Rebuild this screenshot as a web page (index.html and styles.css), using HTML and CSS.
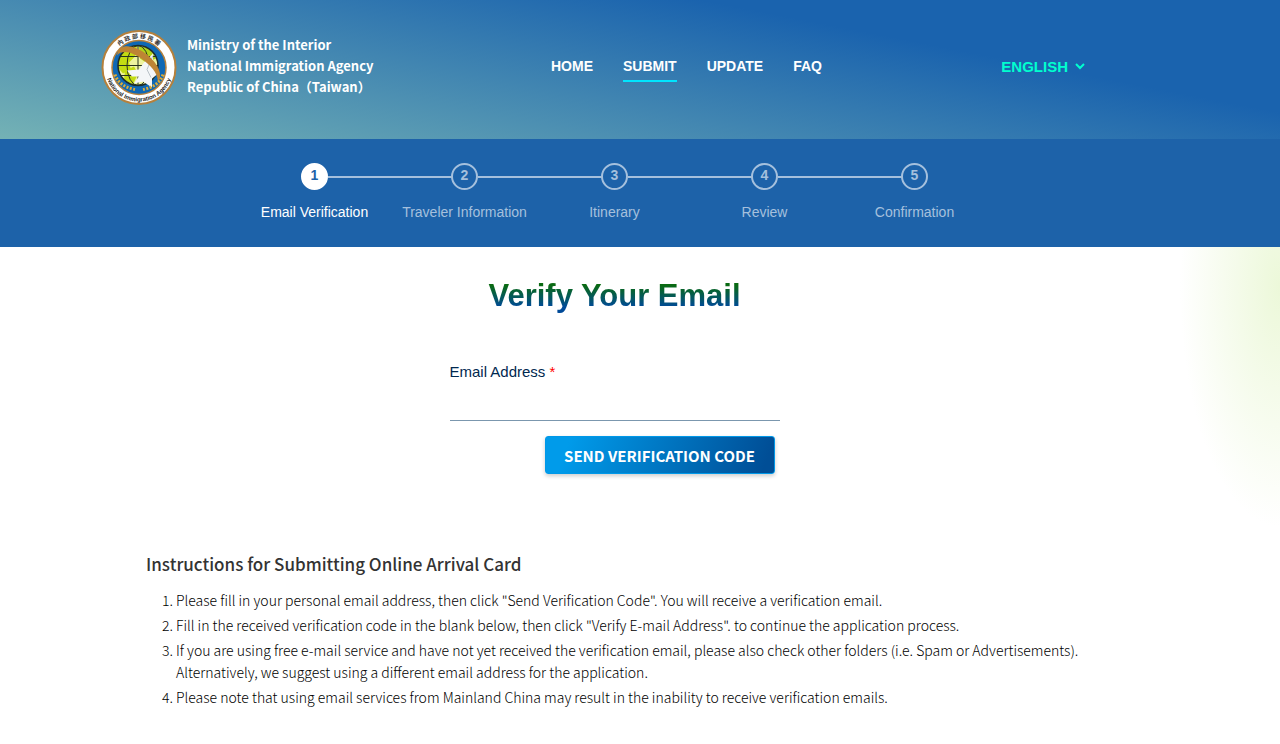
FILE: index.html
```
<!DOCTYPE html>
<html lang="en">
<head>
  <meta charset="UTF-8">
  <meta name="viewport" content="width=device-width, initial-scale=1.0">
  <title>Verify Your Email</title>
  <link rel="stylesheet" href="styles.css">
</head>
<body>
  <header class="site-header">
    <a href="#" class="brand">
      <svg class="seal" viewBox="0 0 76 76" aria-hidden="true">
        <defs>
          <path id="arc-top" d="M9 38 A29 29 0 0 1 67 38"/>
          <path id="arc-bottom" d="M4 38 A34 34 0 0 0 72 38"/>
          <clipPath id="globe"><circle cx="37" cy="36" r="20"/></clipPath>
        </defs>
        <circle cx="38" cy="38" r="36.5" fill="#fff" stroke="#b5803c" stroke-width="2"/>
        <circle cx="38" cy="38" r="27" fill="#0f68b4" stroke="#b5803c" stroke-width="1.5"/>
        <circle cx="37" cy="36" r="20" fill="#eef3a0"/>
        <g clip-path="url(#globe)">
          <path d="M17 26 Q26 13 36 17 L34 27 L28 33 L30 40 L22 44 L16 37Z" fill="#c3dc12"/>
          <path d="M38 17 L48 18 L55 29 L45 33 L39 29Z" fill="#b0d318"/>
          <path d="M24 41 L33 37 L37 44 L32 55 L23 50Z" fill="#c3dc12"/>
          <path d="M17 36H57M19 27H55M20 46H54M37 16V56" fill="none" stroke="#27331f" stroke-width="1"/>
          <ellipse cx="37" cy="36" rx="11" ry="20" fill="none" stroke="#27331f" stroke-width="1"/>
        </g>
        <circle cx="37" cy="36" r="20" fill="none" stroke="#1f2d27" stroke-width="1.5"/>
        <path d="M52 24 L43 33 L38 40 L26 41 L31 47 L38 47 L33 54 L42 52 L51 58 L51 49 L56 45 L52 37Z" fill="#f4f6f8"/>
        <path d="M52 26 L46 40 L50 48" fill="none" stroke="#b9c1c7" stroke-width="1"/>
        <path d="M16 26 C18 12 34 16 46 25 C58 35 62 45 57 54 C57 45 53 39 43 31 C33 23 21 19 16 26Z" fill="#bd8434"/>
        <g fill="none" stroke="#d9ac3b" stroke-width="3" stroke-dasharray="2 1.5">
          <path d="M14 45 Q18 57 34 60"/>
          <path d="M62 45 Q58 57 42 60"/>
        </g>
        <text class="seal-cjk"><textPath href="#arc-top" startOffset="50%">內 政 部 移 民 署</textPath></text>
        <text class="seal-latin"><textPath href="#arc-bottom" startOffset="50%">National Immigration Agency</textPath></text>
      </svg>
      <span class="brand-name">Ministry of the Interior<br>National Immigration Agency<br>Republic of China（Taiwan）</span>
    </a>
    <nav class="main-nav">
      <a href="#">HOME</a>
      <a href="#" class="active">SUBMIT</a>
      <a href="#">UPDATE</a>
      <a href="#">FAQ</a>
    </nav>
    <button type="button" class="language">
      ENGLISH
      <svg width="10" height="7" viewBox="0 0 10 7" aria-hidden="true"><path d="M1 1l4 4 4-4" fill="none" stroke="currentColor" stroke-width="2"/></svg>
    </button>
  </header>

  <section class="progress">
    <ol class="steps">
      <li class="current"><span class="number">1</span>Email Verification</li>
      <li><span class="number">2</span>Traveler Information</li>
      <li><span class="number">3</span>Itinerary</li>
      <li><span class="number">4</span>Review</li>
      <li><span class="number">5</span>Confirmation</li>
    </ol>
  </section>

  <main>
    <h1>Verify Your Email</h1>
    <form class="email-form">
      <label for="email">Email Address <span class="required">*</span></label>
      <input type="email" id="email" required>
      <button type="submit">SEND VERIFICATION CODE</button>
    </form>

    <section class="instructions">
      <h2>Instructions for Submitting Online Arrival Card</h2>
      <ol>
        <li>Please fill in your personal email address, then click "Send Verification Code". You will receive a verification email.</li>
        <li>Fill in the received verification code in the blank below, then click "Verify E-mail Address". to continue the application process.</li>
        <li>If you are using free e-mail service and have not yet received the verification email, please also check other folders (i.e. Spam or Advertisements). Alternatively, we suggest using a different email address for the application.</li>
        <li>Please note that using email services from Mainland China may result in the inability to receive verification emails.</li>
      </ol>
    </section>
  </main>
</body>
</html>
```
FILE: styles.css
```
* {
  box-sizing: border-box;
}
body {
  margin: 0;
  min-height: 100vh;
  font-family: "Liberation Sans", Arial, sans-serif;
  color: #333;
  background: #fff;
}
a {
  color: inherit;
  text-decoration: none;
}

/* Header */
.site-header {
  display: grid;
  grid-template-columns: 450px 1fr auto;
  align-items: center;
  padding: 28px 195px 32px 101px;
  color: #fff;
  background: linear-gradient(11deg, #74b2b5, #1a63ae 71%);
}
.brand {
  display: flex;
  align-items: center;
  gap: 10px;
}
.seal {
  width: 76px;
  height: 79px;
}
.seal-cjk {
  font: bold 6px "Noto Sans CJK TC", sans-serif;
  text-anchor: middle;
  fill: #333;
}
.seal-latin {
  font: bold 6px "Liberation Sans", Arial, sans-serif;
  text-anchor: middle;
  fill: #222;
}
.brand-name {
  padding-bottom: 4px;
  font-family: "Noto Sans CJK TC", sans-serif;
  font-size: 13px;
  font-weight: 700;
  line-height: 21px;
  white-space: nowrap;
}
.main-nav {
  display: flex;
  gap: 30px;
  font-size: 14px;
  font-weight: 700;
}
.main-nav a {
  padding: 4px 0 6px;
  border-bottom: 2px solid transparent;
}
.main-nav .active {
  border-bottom-color: #00e5ff;
}
.language {
  display: flex;
  align-items: center;
  gap: 7px;
  padding: 0 0 2px;
  border: 0;
  background: none;
  color: #00ffcf;
  font: bold 15px "Liberation Sans", Arial, sans-serif;
  cursor: pointer;
}

/* Progress steps */
.progress {
  padding: 24px 51px 26px 0;
  background: #1d62a9;
}
.steps {
  display: flex;
  max-width: 750px;
  margin: 0 auto;
  padding: 0;
  list-style: none;
}
.steps li {
  position: relative;
  flex: 1;
  display: flex;
  flex-direction: column;
  align-items: center;
  gap: 14px;
  font-size: 14px;
  line-height: 17px;
  color: #a5c0dd;
}
.steps .number {
  width: 27px;
  height: 27px;
  border: 2px solid #a5c0dd;
  border-radius: 50%;
  font-weight: 700;
  line-height: 21px;
  text-align: center;
}
.steps li + li::before {
  content: "";
  position: absolute;
  top: 13px;
  right: calc(50% + 13px);
  width: calc(100% - 26px);
  height: 2px;
  background: #a5c0dd;
}
.steps .current {
  color: #fff;
}
.steps .current .number {
  border-color: #fff;
  background: #fff;
  color: #1d62a9;
}

/* Email form */
main {
  padding: 31px 51px 30px 0;
  background:
    radial-gradient(ellipse 100px 240px at 100% 40px, #ecf8d9, transparent) no-repeat,
    #fff;
}
h1 {
  width: fit-content;
  margin: 0 auto;
  font-size: 31px;
  line-height: 36px;
  background: linear-gradient(#0a6a12 20%, #004a98 80%);
  background-clip: text;
  -webkit-background-clip: text;
  color: transparent;
}
.email-form {
  display: flex;
  flex-direction: column;
  max-width: 330px;
  margin: 49px auto 0;
}
.email-form label {
  font-size: 15px;
  line-height: 18px;
  color: #00284f;
}
.required {
  color: #f00;
}
.email-form input {
  height: 40px;
  padding: 0;
  border: 0;
  border-bottom: 1px solid #7b97ae;
  outline: none;
  background: none;
  font-size: 15px;
}
.email-form button {
  align-self: flex-end;
  width: 230px;
  height: 38px;
  margin: 15px 5px 0 0;
  padding: 0;
  border: 1px solid #0098e8;
  border-radius: 3px;
  background: linear-gradient(110deg, #009bea 10%, #004e96 95%);
  box-shadow: 0 2px 4px rgba(0, 0, 0, 0.2);
  color: #fff;
  font: bold 15px "Noto Sans CJK TC", sans-serif;
  cursor: pointer;
}

/* Instructions */
.instructions {
  max-width: 937px;
  margin: 76px auto 0;
  font-family: "Noto Sans CJK TC", sans-serif;
}
.instructions h2 {
  margin: 0 0 12px;
  font-size: 17px;
  font-weight: 500;
  line-height: 27px;
}
.instructions ol {
  margin: 0;
  padding-left: 30px;
  font-size: 14px;
  font-weight: 300;
  line-height: 22px;
  color: #000;
}
.instructions li {
  margin-bottom: 3px;
}
```
